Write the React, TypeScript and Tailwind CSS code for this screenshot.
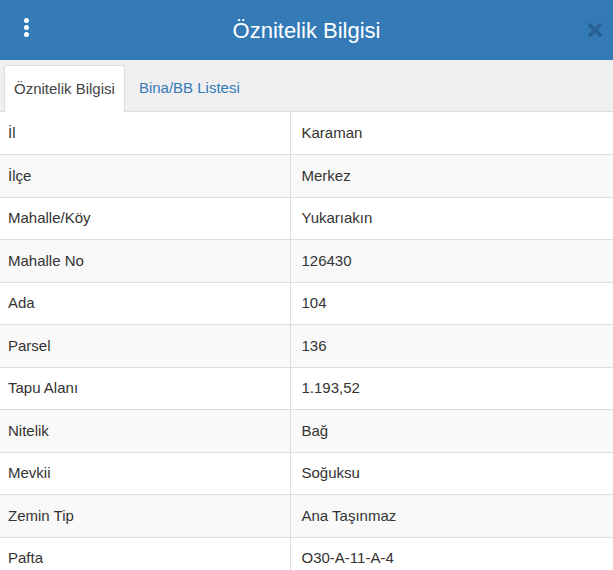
import { useState } from "react";

const rows: [string, string][] = [
  ["İl", "Karaman"],
  ["İlçe", "Merkez"],
  ["Mahalle/Köy", "Yukarıakın"],
  ["Mahalle No", "126430"],
  ["Ada", "104"],
  ["Parsel", "136"],
  ["Tapu Alanı", "1.193,52"],
  ["Nitelik", "Bağ"],
  ["Mevkii", "Soğuksu"],
  ["Zemin Tip", "Ana Taşınmaz"],
  ["Pafta", "O30-A-11-A-4"],
];

export default function App() {
  const [tab, setTab] = useState(0);
  const tabs = ["Öznitelik Bilgisi", "Bina/BB Listesi"];

  return (
    <div
      className="h-[570px] w-[613px] overflow-hidden bg-white text-[#333]"
      style={{ fontFamily: '"Liberation Sans", Arial, sans-serif' }}
    >
      <header className="relative flex h-[60px] items-center justify-center bg-[#337ab7]">
        <div className="absolute left-[24px] top-[18px] flex flex-col gap-[2px]">
          <span className="h-[5px] w-[5px] rounded-full bg-white" />
          <span className="h-[5px] w-[5px] rounded-full bg-white" />
          <span className="h-[5px] w-[5px] rounded-full bg-white" />
        </div>
        <h1 className="text-[22px] text-white">Öznitelik Bilgisi</h1>
        <svg
          className="absolute right-[10px] top-[22px]"
          width="16"
          height="16"
          viewBox="0 0 16 16"
        >
          <path
            d="M3 3 L13 13 M13 3 L3 13"
            stroke="#2a6194"
            strokeWidth="3.8"
            strokeLinecap="round"
          />
        </svg>
      </header>

      <nav className="flex h-[52px] items-end border-b border-[#ddd] bg-[#efefef] pl-[4px]">
        {tabs.map((t, i) => (
          <button
            key={t}
            onClick={() => setTab(i)}
            className={
              i === tab
                ? "-mb-px h-[47px] rounded-t-[3px] border border-b-0 border-[#ddd] bg-white px-[9px] text-[15px] text-[#444]"
                : "-mb-px h-[47px] px-[14px] text-[15px] text-[#337ab7]"
            }
          >
            {t}
          </button>
        ))}
      </nav>

      <table className="w-full border-collapse text-[15px]">
        <tbody>
          {rows.map(([k, v], i) => (
            <tr key={k} className={i % 2 ? "bg-[#f9f9f9]" : "bg-white"}>
              <td className="h-[42.5px] w-[290px] border-b border-r border-[#ddd] pl-[8px]">
                {k}
              </td>
              <td className="h-[42.5px] border-b border-[#ddd] pl-[11px]">{v}</td>
            </tr>
          ))}
        </tbody>
      </table>
    </div>
  );
}
